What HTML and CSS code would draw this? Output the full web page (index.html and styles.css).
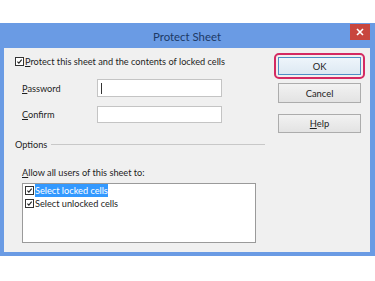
FILE: index.html
```html
<!DOCTYPE html>
<html lang="en">
<head>
  <meta charset="UTF-8">
  <title>Protect Sheet</title>
  <link rel="stylesheet" href="styles.css">
</head>
<body>

<div class="window">
  <div class="titlebar">
    <span class="title">Protect Sheet</span>
    <span class="close">
      <svg width="8" height="8" viewBox="0 0 8 8"><path d="M1 1L7 7M7 1L1 7" stroke="#fff" stroke-width="1.6"/></svg>
    </span>
  </div>

  <div class="content">
    <div class="left">
      <label class="row protect">
        <span class="check"><svg viewBox="0 0 9 9"><path d="M1.8 4.6L3.7 6.6L7.3 2.2" fill="none" stroke="#222" stroke-width="1.4"/></svg></span>
        <span><u>P</u>rotect this sheet and the contents of locked cells</span>
      </label>

      <div class="fields">
        <div class="field">
          <span class="field-label"><u>P</u>assword</span>
          <span class="input pw"><i class="caret"></i></span>
        </div>
        <div class="field confirm">
          <span class="field-label"><u>C</u>onfirm</span>
          <span class="input"></span>
        </div>
      </div>

      <div class="row options">
        <span>Options</span>
        <span class="rule"></span>
      </div>

      <div class="row allow"><u>A</u>llow all users of this sheet to:</div>

      <div class="list">
        <div class="item">
          <span class="check"><svg viewBox="0 0 9 9"><path d="M1.8 4.6L3.7 6.6L7.3 2.2" fill="none" stroke="#222" stroke-width="1.4"/></svg></span>
          <span class="selected">Select locked cells</span>
        </div>
        <div class="item">
          <span class="check"><svg viewBox="0 0 9 9"><path d="M1.8 4.6L3.7 6.6L7.3 2.2" fill="none" stroke="#222" stroke-width="1.4"/></svg></span>
          <span>Select unlocked cells</span>
        </div>
      </div>
    </div>

    <div class="buttons">
      <div class="ring"><button class="btn ok">OK</button></div>
      <button class="btn cancel">Cancel</button>
      <button class="btn help"><u>H</u>elp</button>
    </div>
  </div>
</div>

</body>
</html>
```

FILE: styles.css
```css
* { margin: 0; padding: 0; box-sizing: border-box; }

body {
  font-family: Lato, 'Noto Sans', sans-serif;
  font-size: 9.2px;
  color: #1e1e1e;
  background: #fff;
}

u { text-decoration-thickness: 1px; text-underline-offset: 1px; }

/* Window frame */
.window {
  margin-top: 23px;
  width: 375px;
  background: #6a9be4;
  padding: 0 5px 4px 4px;
}

.titlebar {
  height: 25px;
  display: flex;
  align-items: center;
  justify-content: center;
  position: relative;
}

.title {
  font-size: 11.4px;
  color: #1d3a66;
  margin-top: 2px;
}

.close {
  position: absolute;
  right: 0;
  top: 1px;
  width: 20px;
  height: 16px;
  background: #c8463e;
  display: flex;
  align-items: center;
  justify-content: center;
}

/* Content */
.content {
  height: 204px;
  background: #f0f0f0;
  display: flex;
}

.left {
  width: 261px;
  padding: 6px 0 0 11px;
}

.row {
  height: 14px;
  display: flex;
  align-items: center;
}

.check {
  width: 9px;
  height: 9px;
  border: 1px solid #333;
  background: #fff;
  display: inline-flex;
  flex-shrink: 0;
  margin-right: 1px;
}

.check svg { width: 100%; height: 100%; }

.fields { margin-top: 11px; }

.field {
  height: 18px;
  display: flex;
  align-items: center;
}

.field.confirm { margin-top: 9px; height: 17px; }

.field-label {
  width: 82px;
  padding-left: 7px;
}

.input {
  width: 125px;
  height: 100%;
  background: #fff;
  border: 1px solid #c4c4c4;
  display: flex;
  align-items: center;
  padding-left: 3px;
}

.caret {
  width: 1px;
  height: 11px;
  background: #333;
}

.options { margin-top: 14px; }

.rule {
  flex: 1;
  height: 1px;
  background: #c8c8c8;
  margin-left: 4px;
}

.allow { margin-top: 14px; padding-left: 7px; }

.list {
  margin: 4px 0 0 7px;
  width: 234px;
  height: 60px;
  background: #fff;
  border: 1px solid #9a9a9a;
  padding: 0 2px;
}

.item {
  height: 13px;
  display: flex;
  align-items: center;
}

.selected {
  background: #3399ff;
  color: #fff;
  line-height: 13px;
}

/* Buttons */
.buttons {
  margin-left: 9px;
  padding-top: 5px;
  width: 91px;
  display: flex;
  flex-direction: column;
  align-items: center;
}

.ring {
  width: 91px;
  height: 26px;
  border: 2px solid #d42a62;
  border-radius: 5px;
  padding: 2px;
}

.btn {
  font-family: inherit;
  font-size: 9.4px;
  color: #1e1e1e;
  width: 83px;
  background: linear-gradient(#f2f2f2, #e3e3e3);
  border: 1px solid #acacac;
}

.btn.ok {
  height: 18px;
  background: linear-gradient(#eef5fb, #dde9f3);
  border-color: #4f90c6;
}

.btn.cancel { height: 20px; margin-top: 4px; }
.btn.help { height: 19px; margin-top: 11px; }
```
